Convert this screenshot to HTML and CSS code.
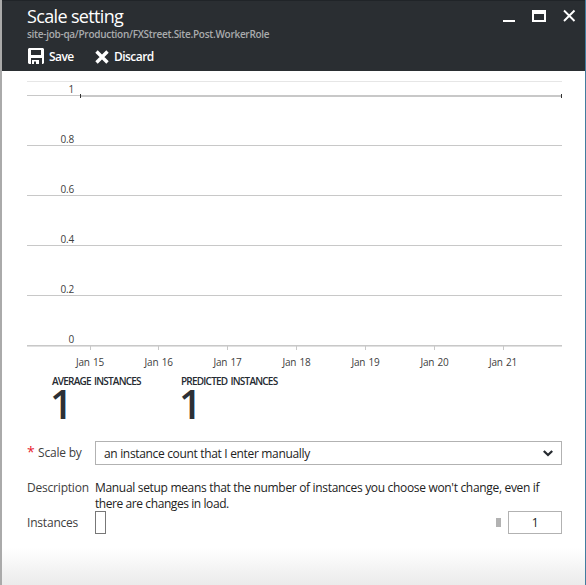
FILE: index.html
```
<!DOCTYPE html>
<html lang="en">
<head>
<meta charset="utf-8">
<title>Scale setting</title>
<link rel="stylesheet" href="styles.css">
</head>
<body>
<main class="blade">
  <header class="header">
    <div class="titles">
      <h1 class="title"><span>Scale setting</span></h1>
      <p class="subtitle"><span>site-job-qa/Production/FXStreet.Site.Post.WorkerRole</span></p>
      <div class="commands">
        <div class="command save">
          <svg width="17" height="17" viewBox="0 0 17 17"><path fill="#fff" fill-rule="evenodd" d="M2 0H16L17 1V15L16 16H15V10H4V16H2L1 15V1ZM4 2V7H14V2ZM5 12H12V16H9V13.500H7V16H5Z"/></svg>
          <span>Save</span>
        </div>
        <div class="command discard">
          <svg width="14" height="14" viewBox="0 0 14 14"><path d="M1.500 1.500L12.500 12.500M12.500 1.500L1.500 12.500" stroke="#fff" stroke-width="3.400"/></svg>
          <span>Discard</span>
        </div>
      </div>
    </div>
    <div class="controls">
      <svg width="74" height="14" viewBox="0 0 74 14"><path fill="#fff" fill-rule="evenodd" d="M0 11H12V13H0ZM29 1H43V13H29ZM31 5V11H41V5Z"/><path d="M61 1.500L71.500 12M71.500 1.500L61 12" stroke="#fff" stroke-width="1.900" fill="none"/></svg>
    </div>
  </header>
  <section class="content">
    <svg class="chart" width="535" height="294" viewBox="27 77 535 294">
      <path class="top-line" d="M27 81.500H562"/>
      <path class="grid" d="M27 95.500H562M27 145.500H562M27 195.500H562M27 245.500H562M27 295.500H562M27 345.500H562"/>
      <path class="axis" d="M27 346.500H562"/>
      <path class="ticks" d="M90.500 346V350M158.500 346V350M227.500 346V350M296.500 346V350M365.500 346V350M434.500 346V350M503.500 346V350"/>
      <path class="series" d="M81 96H561"/>
      <path class="points" d="M80.500 94V98M561.500 94V98"/>
      <g class="labels values">
        <text x="74" y="93">1</text><text x="74" y="143">0.8</text><text x="74" y="193">0.6</text><text x="74" y="243">0.4</text><text x="74" y="293">0.2</text><text x="74" y="343">0</text>
      </g>
      <g class="labels dates">
        <text x="90" y="366">Jan 15</text><text x="158.700" y="366">Jan 16</text><text x="227.500" y="366">Jan 17</text><text x="296.500" y="366">Jan 18</text><text x="365.500" y="366">Jan 19</text><text x="434.500" y="366">Jan 20</text><text x="503" y="366">Jan 21</text>
      </g>
    </svg>
    <div class="metrics">
      <div class="metric average"><h2><span>AVERAGE INSTANCES</span></h2><strong>1</strong></div>
      <div class="metric predicted"><h2><span>PREDICTED INSTANCES</span></h2><strong>1</strong></div>
    </div>
    <div class="form">
      <div class="row scale">
        <span class="label"><b>*</b><span class="scale-label">Scale by</span></span>
        <div class="select"><span>an instance count that I enter manually</span>
          <svg width="10" height="7" viewBox="0 0 10 7"><path d="M.8 1L5 5L9.200 1" fill="none" stroke="#262b30" stroke-width="2.300"/></svg>
        </div>
      </div>
      <div class="row description">
        <span class="label desc-label"><span>Description</span></span>
        <p><span class="line-one">Manual setup means that the number of instances you choose won't change, even if</span><br><span class="line-two">there are changes in load.</span></p>
      </div>
      <div class="row instances">
        <span class="label inst-label"><span>Instances</span></span>
        <span class="thumb"></span><span class="range-end"></span><span class="count">1</span>
      </div>
    </div>
  </section>
</main>
</body>
</html>
```
FILE: styles.css
```
* { box-sizing: border-box; }
body { margin: 0; font-family: "Open Sans", "Noto Sans", sans-serif; font-size: 12px; color: #222; }
h1, h2, p { margin: 0; font-weight: 400; }
span { white-space: nowrap; }
svg { display: block; flex: none; }
.blade { width: 586px; height: 585px; overflow: hidden; border-left: 2px solid #aaa; border-right: 1px solid #427d9f; background: linear-gradient(#fff 0 548px, #ebebeb 585px); }
.header { height: 71px; display: flex; justify-content: space-between; background: #2a2e32; border-top: 1px solid #202428; color: #fff; margin-left: -2px; border-left: 2px solid #43474a; padding-left: 25px; }
.title { font-size: 18px; line-height: 24px; height: 26px; padding-top: 3px; letter-spacing: -.65px; }
.subtitle { font-size: 10px; line-height: 14px; height: 14px; color: #a9abad; font-weight: 600; letter-spacing: -.28px; }
.commands { display: flex; padding-top: 7px; }
.command { display: flex; align-items: center; height: 17px; font-size: 12px; font-weight: 600; letter-spacing: -.55px; }
.save { width: 68px; gap: 5px; }
.discard { gap: 5px; }
.controls { padding: 8px 8px 0 0; }
.content { padding: 6px 23px 0 25px; }
.grid { stroke: #c8c8c8; }
.top-line { stroke: #e6e6e6; }
.axis { stroke: #e0e0e0; }
.ticks { stroke: #c8c8c8; }
.series { stroke: #c8c8c8; stroke-width: 2; }
.points { stroke: #333; }
.labels { font-size: 10px; fill: #404040; }
.values { text-anchor: end; letter-spacing: -.2px; }
.dates { text-anchor: middle; letter-spacing: -.15px; word-spacing: .7px; }
.metrics { display: flex; padding: 4px 0 0 25px; height: 69px; }
.metric { width: 129px; }
.metric h2 { font-size: 10px; line-height: 12px; font-weight: 600; letter-spacing: -.78px; word-spacing: 1.3px; color: #252a30; }
.metric strong { display: block; height: 33px; font-size: 40px; line-height: 33px; font-weight: 600; color: #2c3036; margin-left: -2px; }
.row { display: flex; letter-spacing: -.32px; }
.scale { height: 40px; }
.label { width: 68px; flex: none; color: #404040; line-height: 24px; letter-spacing: -.2px; }
.label b { color: #e81c30; font-size: 14px; font-weight: 400; display: inline-block; width: 11px; }
.select { flex: 1; height: 24px; margin-top: 1px; border: 1px solid #b2b2b2; display: flex; align-items: center; justify-content: space-between; padding: 0 8px 0 8px; background: #fff; letter-spacing: -.33px; }
.description { height: 31px; }
.description p { line-height: 16px; }
.line-two { letter-spacing: -.42px; }
.description .label { line-height: 16px; }
.instances { height: 23px; }
.thumb { width: 11px; height: 23px; border: 1px solid #777; background: #fff; }
.range-end { width: 5px; height: 9px; background: #b2b2b2; margin: 7px 7px 0 auto; }
.count { width: 54px; height: 23px; border: 1px solid #b2b2b2; line-height: 22px; text-align: center; background: #fff; }
```
